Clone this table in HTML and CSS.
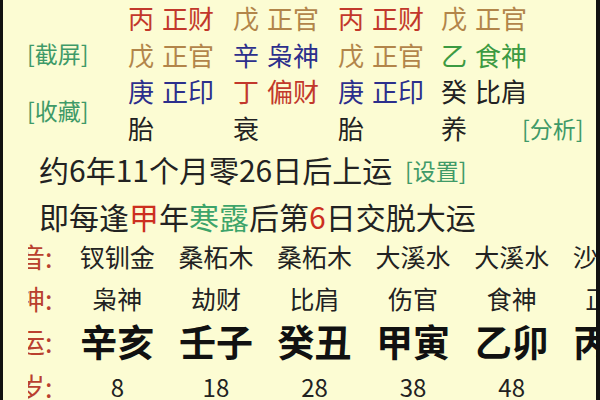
FILE: index.html
```html
<!DOCTYPE html>
<html lang="zh">
<head>
<meta charset="utf-8">
<link rel="stylesheet" href="styles.css">
</head>
<body>
<div class="frame">
  <div class="pillars">
    <div class="side side-r2">[截屏]</div>
    <div class="side side-r34">[收藏]</div>

    <div class="cell c1 r1 red"><span>丙</span><span>正财</span></div>
    <div class="cell c2 r1 tan"><span>戊</span><span>正官</span></div>
    <div class="cell c3 r1 red"><span>丙</span><span>正财</span></div>
    <div class="cell c4 r1 tan"><span>戊</span><span>正官</span></div>

    <div class="cell c1 r2 tan"><span>戊</span><span>正官</span></div>
    <div class="cell c2 r2 navy"><span>辛</span><span>枭神</span></div>
    <div class="cell c3 r2 tan"><span>戊</span><span>正官</span></div>
    <div class="cell c4 r2 green"><span>乙</span><span>食神</span></div>

    <div class="cell c1 r3 navy"><span>庚</span><span>正印</span></div>
    <div class="cell c2 r3 red"><span>丁</span><span>偏财</span></div>
    <div class="cell c3 r3 navy"><span>庚</span><span>正印</span></div>
    <div class="cell c4 r3 ink"><span>癸</span><span>比肩</span></div>

    <div class="cell c1 r4 ink">胎</div>
    <div class="cell c2 r4 ink">衰</div>
    <div class="cell c3 r4 ink">胎</div>
    <div class="cell c4 r4 ink">养</div>
    <div class="side side-r4">[分析]</div>
  </div>

  <div class="info">
    <p class="line">约6年11个月零26日后上运 <span class="link">[设置]</span></p>
    <p class="line">即每逢<span class="hl-red">甲</span>年<span class="hl-green">寒露</span>后第<span class="hl-red">6</span>日交脱大运</p>
  </div>

  <div class="dayun">
    <div class="lab"><span>音:</span></div>
    <div class="v nayin">钗钏金</div>
    <div class="v nayin">桑柘木</div>
    <div class="v nayin">桑柘木</div>
    <div class="v nayin">大溪水</div>
    <div class="v nayin">大溪水</div>
    <div class="v nayin">沙中土</div>

    <div class="lab"><span>神:</span></div>
    <div class="v shishen">枭神</div>
    <div class="v shishen">劫财</div>
    <div class="v shishen">比肩</div>
    <div class="v shishen">伤官</div>
    <div class="v shishen">食神</div>
    <div class="v shishen">正财</div>

    <div class="lab"><span>运:</span></div>
    <div class="v gz">辛亥</div>
    <div class="v gz">壬子</div>
    <div class="v gz">癸丑</div>
    <div class="v gz">甲寅</div>
    <div class="v gz">乙卯</div>
    <div class="v gz">丙辰</div>

    <div class="lab"><span>岁:</span></div>
    <div class="v age">8</div>
    <div class="v age">18</div>
    <div class="v age">28</div>
    <div class="v age">38</div>
    <div class="v age">48</div>
    <div class="v age">58</div>
  </div>
</div>
</body>
</html>
```

FILE: styles.css
```css
html, body {
  margin: 0;
  padding: 0;
  background: #000;
}
body {
  font-family: "Noto Sans CJK SC", "Noto Sans", sans-serif;
  color: #222;
}
.frame {
  box-sizing: border-box;
  width: 600px;
  height: 400px;
  border-left: 3px solid #111;
  border-right: 4px solid #111;
  background: #fcfcd3;
  overflow: hidden;
}

/* top pillars grid */
.pillars {
  display: grid;
  grid-template-columns: 104px 105px 105px 103px 81px 1fr;
  grid-auto-rows: 36.5px;
  padding-left: 21px;
  font-size: 26px;
  line-height: 36.5px;
}
.cell {
  display: flex;
  gap: 8px;
  white-space: nowrap;
}
.c1 { grid-column: 2; }
.c2 { grid-column: 3; }
.c3 { grid-column: 4; }
.c4 { grid-column: 5; }
.r1 { grid-row: 1; }
.r2 { grid-row: 2; }
.r3 { grid-row: 3; }
.r4 { grid-row: 4; }

.side {
  grid-column: 1;
  font-size: 23px;
  color: #3f9a68;
  white-space: nowrap;
  margin-left: 3px;
}
.side-r2 { grid-row: 2; margin-top: -2px; }
.side-r34 { grid-row: 3 / span 2; align-self: center; line-height: 30px; }
.side-r4 { grid-column: 6; grid-row: 4; margin-left: 0; }

.red { color: #c2382b; }
.tan { color: #b2854a; }
.navy { color: #2c2f8c; }
.green { color: #3c9a42; }
.ink { color: #222; }

/* info lines */
.info {
  padding-left: 36px;
  margin-top: 0;
}
.line {
  margin: 0;
  font-size: 30px;
  line-height: 46px;
  white-space: nowrap;
}
.link {
  font-size: 23px;
  color: #3f9a68;
  margin-left: 6px;
  vertical-align: 2px;
}
.hl-red { color: #cc2f1f; }
.hl-green { color: #3da46a; }

/* da yun table */
.dayun {
  display: grid;
  grid-template-columns: 40px repeat(6, 98.6px);
  grid-template-rows: 42px 42px 44px 46px;
  padding-left: 25px;
  margin-top: -4px;
}
.lab {
  overflow: hidden;
  color: #b9402e;
  font-size: 27px;
  display: flex;
  align-items: center;
  white-space: nowrap;
}
.lab span {
  margin-left: -10px;
}
.v {
  text-align: center;
  white-space: nowrap;
  display: flex;
  align-items: center;
  justify-content: center;
}
.nayin, .shishen { font-size: 25px; }
.gz { font-size: 37px; font-weight: 700; color: #111; }
.age { font-size: 24px; }
```
